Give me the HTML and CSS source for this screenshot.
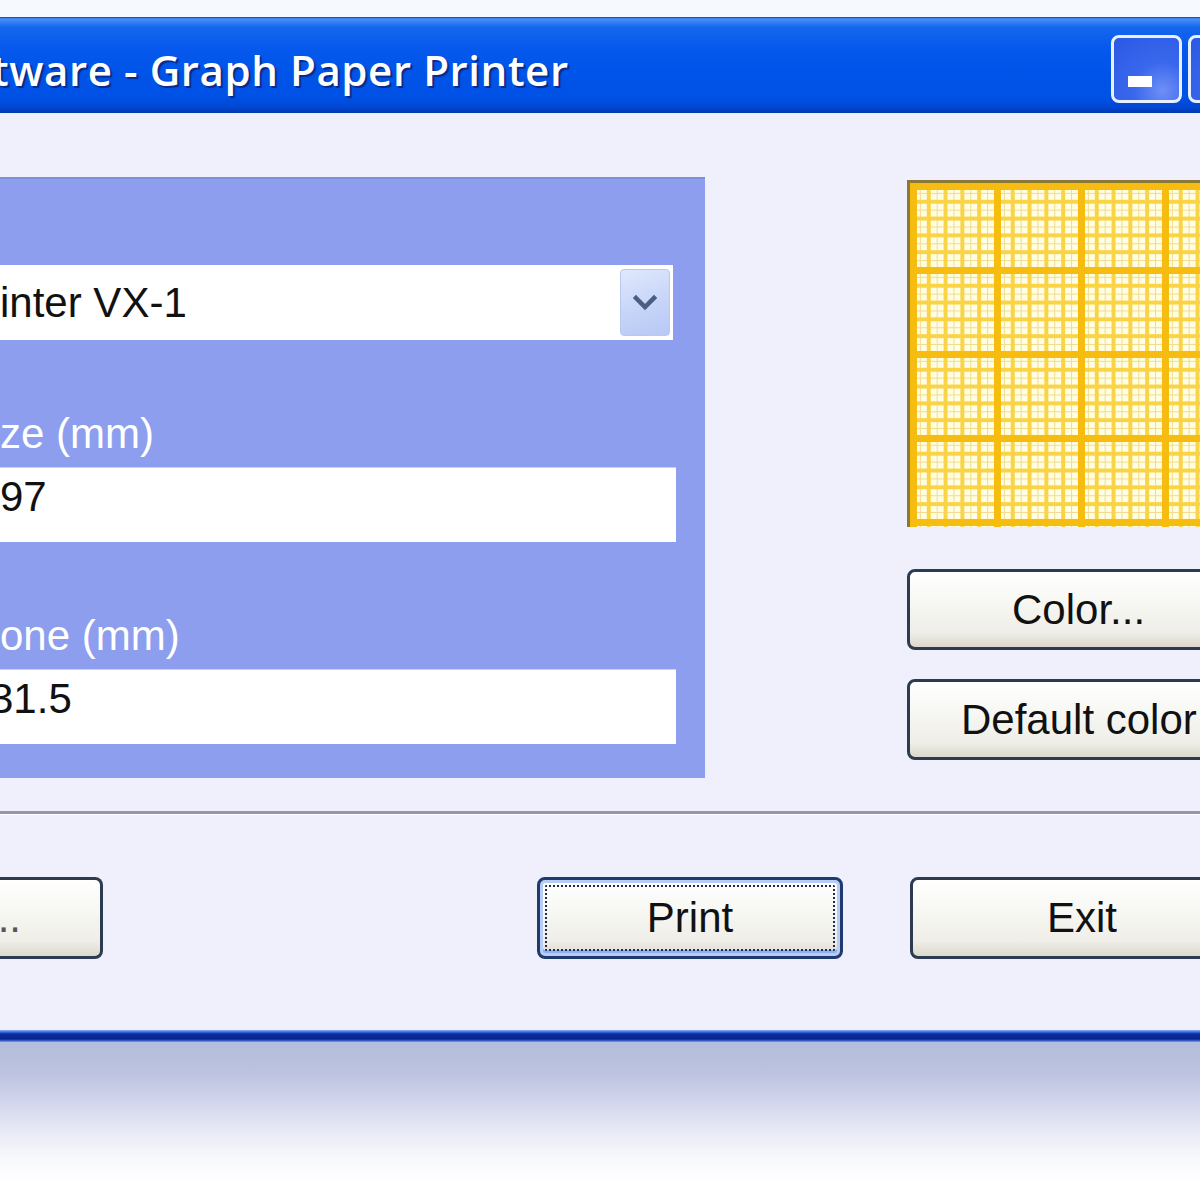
FILE: index.html
```html
<!DOCTYPE html>
<html>
<head>
<meta charset="utf-8">
<title>Graph Paper Printer</title>
<link rel="stylesheet" href="styles.css">
</head>
<body>
<div class="screen">
  <div class="top-gap"></div>
  <div class="window">
    <div class="titlebar">
      <span class="title">tware - Graph Paper Printer</span>
      <div class="caption-buttons">
        <div class="cap-btn"><span class="min-glyph"></span></div>
        <div class="cap-btn"></div>
      </div>
    </div>
    <div class="client">
      <div class="main-row">
        <div class="panel">
          <div class="combo">
            <span class="combo-text">inter VX-1</span>
            <span class="dd-btn">
              <svg width="30" height="22" viewBox="0 0 30 22"><path d="M6 6 L15 15 L24 6" fill="none" stroke="#4a5d82" stroke-width="4.5" stroke-linecap="square" stroke-linejoin="miter"/></svg>
            </span>
          </div>
          <div class="label">ze (mm)</div>
          <div class="field">97</div>
          <div class="label">one (mm)</div>
          <div class="field cut">31.5</div>
        </div>
        <div class="side">
          <div class="paper"></div>
          <div class="btn side-btn">Color...</div>
          <div class="btn side-btn">Default color</div>
        </div>
      </div>
      <div class="separator"></div>
      <div class="btn-row">
        <div class="btn btn-left"><span class="dots">...</span></div>
        <div class="btn btn-print focus">Print</div>
        <div class="btn btn-exit">Exit</div>
      </div>
    </div>
    <div class="bottom-border"></div>
  </div>
  <div class="shadow"></div>
</div>
</body>
</html>
```
FILE: styles.css
```css
html, body {
  margin: 0;
  padding: 0;
  background: #ffffff;
  overflow: hidden;
}

.screen {
  width: 1200px;
  height: 1200px;
  overflow: hidden;
  font-family: "Liberation Sans", Arial, sans-serif;
}

.top-gap {
  height: 17px;
  background: #f6f9fd;
}

.window {
  width: 1260px;
}

.titlebar {
  height: 96px;
  display: flex;
  align-items: flex-start;
  background: linear-gradient(180deg,
    #0a3fc4 0px, #4a94fa 2px, #3b86f6 4px, #1667ee 10px,
    #0659ec 30px, #0053e8 60px, #0052e6 80px, #0047d2 90px, #0038b2 96px);
}

.title {
  flex: 1;
  color: #ffffff;
  font-family: "Open Sans", "DejaVu Sans", sans-serif;
  font-weight: 600;
  font-size: 42px;
  line-height: 56px;
  letter-spacing: 0.6px;
  text-indent: -8px;
  white-space: nowrap;
  text-shadow: 2px 2px 1px #0a2a8a;
  margin-top: 25px;
}

.caption-buttons {
  display: flex;
  gap: 6px;
  margin-right: 1px;
  margin-top: 18px;
}

.cap-btn {
  width: 71px;
  height: 68px;
  flex-shrink: 0;
  box-sizing: border-box;
  border: 3px solid #e8f0ff;
  border-radius: 8px;
  background: radial-gradient(circle at 75% 85%, #6f8ff6 0%, #3a68ec 40%, #2b58e4 100%);
  display: flex;
  align-items: flex-end;
  padding-left: 14px;
}

.min-glyph {
  width: 24px;
  height: 11px;
  background: #ffffff;
  margin-bottom: 13px;
}

.client {
  background: #eff0fb;
  padding-top: 64px;
  height: 917px;
  box-sizing: border-box;
}

.main-row {
  display: flex;
  align-items: flex-start;
}

.panel {
  width: 705px;
  height: 601px;
  flex-shrink: 0;
  box-sizing: border-box;
  background: #8c9eed;
  border-top: 2px solid #7e8fdc;
  padding: 86px 29px 0 0;
}

.combo {
  height: 75px;
  background: #ffffff;
  display: flex;
  align-items: flex-start;
  margin-right: 3px;
}

.combo-text {
  flex: 1;
  font-size: 42px;
  line-height: 48px;
  padding-top: 14px;
  color: #111111;
  white-space: nowrap;
}

.dd-btn {
  width: 50px;
  height: 67px;
  margin: 4px 3px 0 0;
  border-radius: 4px;
  background: linear-gradient(160deg, #dfe8fd 0%, #c5d3f7 60%, #b7c8f4 100%);
  border: 1px solid #b9c8ee;
  display: flex;
  align-items: center;
  justify-content: center;
  box-sizing: border-box;
}

.label {
  color: #ffffff;
  font-size: 42px;
  line-height: 48px;
  margin-top: 70px;
  margin-bottom: 9px;
  white-space: nowrap;
}

.field {
  height: 75px;
  box-sizing: border-box;
  background: #ffffff;
  border-top: 1px solid #c9d1f4;
  font-size: 42px;
  line-height: 48px;
  padding-top: 5px;
  color: #111111;
  white-space: nowrap;
}

.field.cut {
  text-indent: -10px;
}

.side {
  margin-left: 202px;
  width: 330px;
  flex-shrink: 0;
  display: flex;
  flex-direction: column;
}

.paper {
  margin-top: 3px;
  height: 347px;
  box-sizing: border-box;
  border-left: 3px solid #8a7838;
  border-top: 3px solid #8a7838;
  background-color: #fffde2;
  background-image:
    linear-gradient(90deg, #f7bc10 0 7px, transparent 7px),
    linear-gradient(180deg, #f7bc10 0 7px, transparent 7px),
    linear-gradient(90deg, #fad446 0 4px, transparent 4px),
    linear-gradient(180deg, #fad446 0 4px, transparent 4px),
    linear-gradient(90deg, transparent 0 9.5px, #f0dc92 9.5px 11px, transparent 11px),
    linear-gradient(180deg, transparent 0 9.5px, #f0dc92 9.5px 11px, transparent 11px);
  background-size:
    84px 100%,
    100% 84px,
    16.8px 100%,
    100% 16.8px,
    16.8px 100%,
    100% 16.8px;
}

.btn {
  height: 82px;
  flex-shrink: 0;
  box-sizing: border-box;
  border: 3px solid #2c3a52;
  border-radius: 8px;
  background: linear-gradient(180deg, #ffffff 0%, #f7f7f3 40%, #efeee8 80%, #dcd8cc 100%);
  color: #111111;
  font-size: 42px;
  display: flex;
  align-items: center;
  justify-content: center;
  white-space: nowrap;
  position: relative;
}

.side-btn {
  margin-top: 42px;
  height: 81px;
  justify-content: flex-start;
  padding-left: 102px;
}

.side-btn + .side-btn {
  margin-top: 29px;
  padding-left: 51px;
}

.separator {
  margin-top: 33px;
  height: 3px;
  background: #9496b6;
  border-bottom: 1px solid #ffffff;
}

.btn-row {
  display: flex;
  margin-top: 62px;
}

.btn-left {
  width: 103px;
  justify-content: flex-start;
  border-left: none;
  border-radius: 0 8px 8px 0;
}

.dots {
  color: #555555;
  margin-left: -14px;
  font-size: 42px;
}

.btn-print {
  width: 306px;
  margin-left: 434px;
}

.btn-print.focus {
  border-color: #1f3a6e;
  box-shadow: inset 0 0 0 3px #b7cdf3, inset 0 -3px 0 3px #8fb0ea;
}

.btn-print.focus::after {
  content: "";
  position: absolute;
  left: 5px;
  right: 5px;
  top: 5px;
  bottom: 5px;
  border: 2px dotted #1b2c55;
  border-radius: 2px;
}

.btn-exit {
  width: 344px;
  margin-left: 67px;
}

.bottom-border {
  height: 12px;
  background: linear-gradient(180deg, #8fb1f4 0px, #3a6ce0 2px, #0a2c9e 4px, #06268f 9px, #3f6bd6 11px, #8aa7e8 12px);
}

.shadow {
  height: 160px;
  background: linear-gradient(180deg, #b4bddc 0px, #bcc2e0 30px, #d2d6ec 60px, #e8eaf6 90px, #f7f8fc 115px, #ffffff 140px);
}
```
